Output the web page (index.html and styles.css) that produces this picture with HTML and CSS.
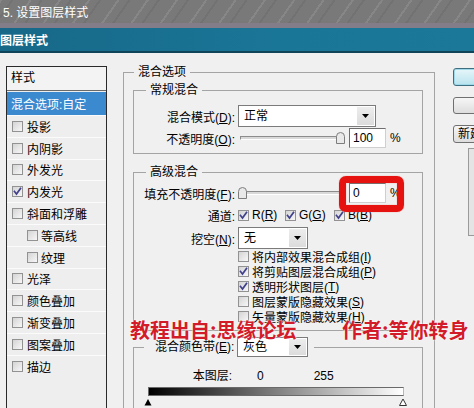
FILE: index.html
```html
<!DOCTYPE html>
<html lang="zh-CN">
<head>
<meta charset="utf-8">
<title>图层样式</title>
<link rel="stylesheet" href="styles.css">
</head>
<body>
<div class="page">
  <div class="topbar">5. 设置图层样式</div>
  <div class="band"></div>
  <div class="titlebar">图层样式</div>

  <div class="dialog">
    <div class="stylelist">
      <div class="list-head">样式</div>
      <div class="list-item selected">混合选项:自定</div>
      <div class="list-item"><span class="cb"></span>投影</div>
      <div class="list-item"><span class="cb"></span>内阴影</div>
      <div class="list-item"><span class="cb"></span>外发光</div>
      <div class="list-item"><span class="cb"><svg class="chk" viewBox="0 0 9 9"><path d="M1.5 4.5 L3.5 7 L7.5 1.5"/></svg></span>内发光</div>
      <div class="list-item"><span class="cb"></span>斜面和浮雕</div>
      <div class="list-item sub"><span class="cb"></span>等高线</div>
      <div class="list-item sub"><span class="cb"></span>纹理</div>
      <div class="list-item"><span class="cb"></span>光泽</div>
      <div class="list-item"><span class="cb"></span>颜色叠加</div>
      <div class="list-item"><span class="cb"></span>渐变叠加</div>
      <div class="list-item"><span class="cb"></span>图案叠加</div>
      <div class="list-item"><span class="cb"></span>描边</div>
    </div>

    <div class="group outer">
      <div class="gtitle t-outer">混合选项</div>

      <div class="group inner general">
        <div class="gtitle t-inner">常规混合</div>
        <div class="frow r-mode">
          <span class="lbl">混合模式(<u>D</u>):</span>
          <div class="select s-mode"><span class="val">正常</span><span class="arrow"><svg width="7" height="4" viewBox="0 0 7 4"><path d="M0 0H7L3.5 4Z"/></svg></span></div>
        </div>
        <div class="frow r-opacity">
          <span class="lbl">不透明度(<u>O</u>):</span>
          <div class="slider">
            <div class="track"></div>
            <svg class="thumb thumb-right" width="9" height="12" viewBox="0 0 9 12"><path d="M0.5 11.5 V4.5 Q0.5 0.5 4.5 0.5 Q8.5 0.5 8.5 4.5 V11.5 Z"/></svg>
          </div>
          <span class="num">100</span><span class="pct">%</span>
        </div>
      </div>

      <div class="group inner advanced">
        <div class="gtitle t-inner">高级混合</div>
        <div class="frow r-fill">
          <span class="lbl">填充不透明度(<u>F</u>):</span>
          <div class="slider">
            <div class="track"></div>
            <svg class="thumb thumb-left" width="9" height="12" viewBox="0 0 9 12"><path d="M0.5 11.5 V4.5 Q0.5 0.5 4.5 0.5 Q8.5 0.5 8.5 4.5 V11.5 Z"/></svg>
          </div>
          <span class="num">0</span><span class="pct">%</span>
          <div class="highlight"></div>
        </div>
        <div class="frow r-channels">
          <span class="lbl">通道:</span>
          <span class="chan c-r"><span class="cb"><svg class="chk" viewBox="0 0 9 9"><path d="M1.5 4.5 L3.5 7 L7.5 1.5"/></svg></span>R(<u>R</u>)</span>
          <span class="chan c-g"><span class="cb"><svg class="chk" viewBox="0 0 9 9"><path d="M1.5 4.5 L3.5 7 L7.5 1.5"/></svg></span>G(<u>G</u>)</span>
          <span class="chan c-b"><span class="cb"><svg class="chk" viewBox="0 0 9 9"><path d="M1.5 4.5 L3.5 7 L7.5 1.5"/></svg></span>B(<u>B</u>)</span>
        </div>
        <div class="frow r-knock">
          <span class="lbl">挖空(<u>N</u>):</span>
          <div class="select s-small"><span class="val">无</span><span class="arrow"><svg width="7" height="4" viewBox="0 0 7 4"><path d="M0 0H7L3.5 4Z"/></svg></span></div>
        </div>
        <div class="crow"><span class="cb"></span>将内部效果混合成组(<u>I</u>)</div>
        <div class="crow"><span class="cb"><svg class="chk" viewBox="0 0 9 9"><path d="M1.5 4.5 L3.5 7 L7.5 1.5"/></svg></span>将剪贴图层混合成组(<u>P</u>)</div>
        <div class="crow"><span class="cb"><svg class="chk" viewBox="0 0 9 9"><path d="M1.5 4.5 L3.5 7 L7.5 1.5"/></svg></span>透明形状图层(<u>T</u>)</div>
        <div class="crow"><span class="cb"></span>图层蒙版隐藏效果(<u>S</u>)</div>
        <div class="crow"><span class="cb"></span>矢量蒙版隐藏效果(<u>H</u>)</div>
      </div>

      <div class="group inner blendif">
        <div class="gtitle t-blend">
          <span class="blbl">混合颜色带(<u>E</u>):</span>
          <div class="select s-gray"><span class="val">灰色</span><span class="arrow"><svg width="7" height="4" viewBox="0 0 7 4"><path d="M0 0H7L3.5 4Z"/></svg></span></div>
        </div>
        <div class="layer-row">
          <span class="llbl">本图层:</span>
          <span class="v0">0</span>
          <span class="v255">255</span>
        </div>
        <div class="gbar"></div>
        <svg class="tris" width="280" height="8" viewBox="0 0 280 8">
          <path class="tri-black" d="M10.5 7.5 L14 1 L17.5 7.5 Z"/>
          <path class="tri-white" d="M265.5 7.5 L269 1 L272.5 7.5 Z"/>
        </svg>
      </div>
    </div>

    <div class="side">
      <div class="btn default"></div>
      <div class="btn b2"></div>
      <div class="btn b3">新建样式(W)...</div>
      <div class="preview"></div>
    </div>
  </div>

  <span class="wm wm1">教程出自:思缘论坛</span>
  <span class="wm wm2">作者:等你转身</span>
</div>
</body>
</html>
```

FILE: styles.css
```css
* { box-sizing: border-box; }
html, body { margin: 0; padding: 0; }
body {
  width: 474px;
  height: 408px;
  overflow: hidden;
  background: #f0f0f0;
  font-family: "Liberation Sans", "Noto Sans CJK SC", sans-serif;
  font-size: 12px;
  color: #000;
}
u { text-decoration: underline; text-underline-offset: 1px; }

.page {
  position: relative;
  width: 474px;
  height: 408px;
  overflow: hidden;
}

/* window chrome */
.topbar {
  height: 23px;
  padding: 3px 0 0 3px;
  line-height: 20px;
  color: #fff;
  font-size: 12px;
  background:
    repeating-linear-gradient(125deg, rgba(255,255,255,0.10) 0 2px, rgba(0,0,0,0) 2px 9px, rgba(0,0,0,0.06) 9px 11px, rgba(0,0,0,0) 11px 24px),
    #797979;
}
.band { height: 5px; background: #837d8a; }
.titlebar {
  height: 25px;
  padding-top: 3px;
  line-height: 20px;
  color: #fff;
  font-weight: bold;
  background: linear-gradient(to right, #176888, #1a7697 60%, #1b7899);
  border-bottom: 2px solid #0f4459;
}

.dialog {
  display: flex;
  align-items: flex-start;
  padding-left: 6px;
}

/* style list */
.stylelist {
  flex: none;
  width: 101px;
  height: 360px;
  margin-top: 13px;
  border: 1px solid #2a2a2a;
  background: #eeeeee;
}
.list-head {
  height: 24px;
  line-height: 23px;
  padding-left: 4px;
  background: #f3f3f3;
  border-bottom: 1px solid #6a6a6a;
}
.list-item {
  height: 21.8px;
  display: flex;
  align-items: center;
  border-top: 1px solid #fbfbfb;
  white-space: nowrap;
}
.list-item .cb { margin-left: 5px; margin-right: 4px; }
.list-item.sub .cb { margin-left: 20px; margin-right: 3px; }
.list-item.selected {
  margin-top: 1px;
  height: 23px;
  padding-left: 4px;
  border-top: 0;
  background: #3b89cf;
  color: #fff;
}

/* checkbox */
.cb {
  flex: none;
  display: inline-flex;
  align-items: center;
  justify-content: center;
  width: 11px;
  height: 11px;
  border: 1px solid #929292;
  background: linear-gradient(135deg, #d4d4d4, #f7f7f7);
}
.chk { width: 9px; height: 9px; display: block; }
.chk path { fill: none; stroke: #40408c; stroke-width: 1.7; stroke-linecap: square; }

/* group boxes */
.group { border: 1px solid #a4a4a4; }
.outer {
  flex: none;
  width: 312px;
  height: 360px;
  margin-left: 16px;
  margin-top: 19px;
  padding: 0 11px 0 9px;
}
.gtitle {
  width: fit-content;
  margin-top: -9px;
  padding: 0 4px;
  line-height: 16px;
  background: #f0f0f0;
}
.t-outer { margin-left: 1px; }
.t-inner { margin-left: 12px; }
.inner { width: 290px; }
.general { margin-top: 10px; padding-bottom: 5px; }
.advanced { margin-top: 18px; padding-bottom: 6px; }
.blendif { margin-top: 16px; height: 80px; }

/* form rows */
.frow { display: flex; align-items: center; }
.lbl {
  flex: none;
  width: 101px;
  margin-right: 3px;
  text-align: right;
  white-space: nowrap;
}
.r-mode { margin-top: 7px; height: 22px; }
.r-opacity { margin-top: 1px; height: 20px; }
.r-fill { margin-top: 3px; height: 20px; position: relative; }
.r-channels { margin-top: 3px; height: 18px; }
.r-knock { margin-top: 3px; height: 22px; }

.select {
  display: flex;
  align-items: stretch;
  height: 22px;
  border: 1px solid #7b7b7b;
  background: #fff;
}
.select .val { flex: 1; padding-left: 5px; line-height: 20px; }
.select .arrow {
  width: 17px;
  display: flex;
  align-items: center;
  justify-content: center;
  margin: 1px;
  background: linear-gradient(#ededed, #dcdcdc);
}
.select .arrow path { fill: #000; }
.s-mode { width: 138px; }
.s-small { width: 70px; }
.s-gray { width: 71px; height: 20px; }
.s-gray .val { line-height: 18px; }

.slider {
  position: relative;
  flex: none;
  width: 107px;
  height: 20px;
  margin-right: 4px;
  display: flex;
  align-items: center;
}
.track {
  width: 100%;
  height: 4px;
  margin-left: 2px;
  border: 1px solid;
  border-color: #8c8c8c #ffffff #ffffff #8c8c8c;
  background: #d9d9d9;
}
.thumb { position: absolute; top: 4px; }
.thumb path { fill: #e9e9e9; stroke: #7d7d7d; stroke-width: 1; }
.thumb-right { right: 0; }
.thumb-left { left: 0; }

.num {
  flex: none;
  width: 37px;
  height: 20px;
  line-height: 18px;
  padding-left: 3px;
  border: 1px solid;
  border-color: #6e6e6e #cfcfcf #cfcfcf #6e6e6e;
  background: #fff;
}
.pct { margin-left: 4px; }

.highlight {
  position: absolute;
  left: 205px;
  top: -7px;
  width: 65px;
  height: 36px;
  border: 7px solid #e5120f;
  border-radius: 7px;
  box-shadow: 0 0 1px #f56060, inset 0 0 1px #f56060;
}

.chan { display: inline-flex; align-items: center; white-space: nowrap; }
.chan .cb { margin-right: 3px; }
.c-r { width: 47px; }
.c-g { width: 49px; }

.crow {
  display: flex;
  align-items: center;
  height: 15px;
  padding-left: 104px;
  white-space: nowrap;
}
.crow .cb { margin-right: 3px; }

/* blend-if */
.t-blend {
  display: flex;
  align-items: center;
  margin-top: -11px;
  margin-left: 10px;
  padding: 0 6px 0 11px;
  line-height: 20px;
}
.blbl { width: 82px; white-space: nowrap; }
.layer-row { display: flex; margin-top: 11px; line-height: 16px; }
.llbl { width: 98px; text-align: right; }
.v0 { margin-left: 25px; }
.v255 { margin-left: 50px; }
.gbar {
  margin-top: 3px;
  margin-left: 14px;
  width: 256px;
  height: 9px;
  border: 1px solid #6a6a6a;
  border-right-color: #b8b8b8;
  background: linear-gradient(to right, #000, #fff);
}
.tris { display: block; margin-top: 2px; }
.tri-black { fill: #000; }
.tri-white { fill: #fff; stroke: #333; stroke-width: 1; }

/* right side buttons */
.side { flex: none; width: 80px; margin-left: 18px; margin-top: 15px; }
.btn {
  width: 76px;
  height: 18px;
  border: 1px solid #707070;
  border-radius: 3px;
  background: linear-gradient(#f6f6f6, #dddddd);
}
.btn.default {
  border-color: #3d6f80;
  background: linear-gradient(#e6f6fa, #b9e3ee);
  box-shadow: inset 0 0 0 1px #9fd8e8;
}
.btn.b2 { margin-top: 11px; height: 17px; }
.btn.b3 {
  margin-top: 11px;
  padding-left: 4px;
  line-height: 16px;
  white-space: nowrap;
  overflow: hidden;
}
.preview {
  margin: 5px 0 0 15px;
  width: 40px;
  height: 88px;
  border: 1px solid #9a9a9a;
  background: #e4e4e4;
}

/* watermark */
.wm {
  position: absolute;
  top: 318px;
  line-height: 24px;
  font-family: "Noto Sans CJK SC", sans-serif;
  font-size: 20px;
  font-weight: 700;
  color: #d21c2a;
  white-space: nowrap;
  text-shadow: 0 0 2px #fff, 0 0 1px #fff;
}
.wm1 { left: 130px; }
.wm2 { left: 342px; }
```
